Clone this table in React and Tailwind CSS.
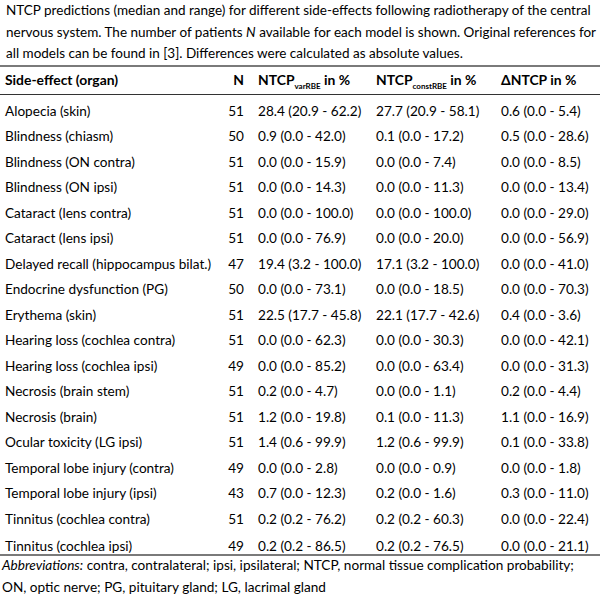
import React from "react";

const rows = [
  ["Alopecia (skin)", "51", "28.4 (20.9 - 62.2)", "27.7 (20.9 - 58.1)", "0.6 (0.0 - 5.4)"],
  ["Blindness (chiasm)", "50", "0.9 (0.0 - 42.0)", "0.1 (0.0 - 17.2)", "0.5 (0.0 - 28.6)"],
  ["Blindness (ON contra)", "51", "0.0 (0.0 - 15.9)", "0.0 (0.0 - 7.4)", "0.0 (0.0 - 8.5)"],
  ["Blindness (ON ipsi)", "51", "0.0 (0.0 - 14.3)", "0.0 (0.0 - 11.3)", "0.0 (0.0 - 13.4)"],
  ["Cataract (lens contra)", "51", "0.0 (0.0 - 100.0)", "0.0 (0.0 - 100.0)", "0.0 (0.0 - 29.0)"],
  ["Cataract (lens ipsi)", "51", "0.0 (0.0 - 76.9)", "0.0 (0.0 - 20.0)", "0.0 (0.0 - 56.9)"],
  ["Delayed recall (hippocampus bilat.)", "47", "19.4 (3.2 - 100.0)", "17.1 (3.2 - 100.0)", "0.0 (0.0 - 41.0)"],
  ["Endocrine dysfunction (PG)", "50", "0.0 (0.0 - 73.1)", "0.0 (0.0 - 18.5)", "0.0 (0.0 - 70.3)"],
  ["Erythema (skin)", "51", "22.5 (17.7 - 45.8)", "22.1 (17.7 - 42.6)", "0.4 (0.0 - 3.6)"],
  ["Hearing loss (cochlea contra)", "51", "0.0 (0.0 - 62.3)", "0.0 (0.0 - 30.3)", "0.0 (0.0 - 42.1)"],
  ["Hearing loss (cochlea ipsi)", "49", "0.0 (0.0 - 85.2)", "0.0 (0.0 - 63.4)", "0.0 (0.0 - 31.3)"],
  ["Necrosis (brain stem)", "51", "0.2 (0.0 - 4.7)", "0.0 (0.0 - 1.1)", "0.2 (0.0 - 4.4)"],
  ["Necrosis (brain)", "51", "1.2 (0.0 - 19.8)", "0.1 (0.0 - 11.3)", "1.1 (0.0 - 16.9)"],
  ["Ocular toxicity (LG ipsi)", "51", "1.4 (0.6 - 99.9)", "1.2 (0.6 - 99.9)", "0.1 (0.0 - 33.8)"],
  ["Temporal lobe injury (contra)", "49", "0.0 (0.0 - 2.8)", "0.0 (0.0 - 0.9)", "0.0 (0.0 - 1.8)"],
  ["Temporal lobe injury (ipsi)", "43", "0.7 (0.0 - 12.3)", "0.2 (0.0 - 1.6)", "0.3 (0.0 - 11.0)"],
  ["Tinnitus (cochlea contra)", "51", "0.2 (0.2 - 76.2)", "0.2 (0.2 - 60.3)", "0.0 (0.0 - 22.4)"],
  ["Tinnitus (cochlea ipsi)", "49", "0.2 (0.2 - 86.5)", "0.2 (0.2 - 76.5)", "0.0 (0.0 - 21.1)"],
];

const cols = "grid grid-cols-[220px_24px_132px_125px_1fr]";

const App = () => {
  return (
    <div className="w-[600px] h-[600px] overflow-hidden bg-white text-black text-[13.6px] leading-[21.5px] font-['Lato',sans-serif]">
      <p className="px-[6px] whitespace-nowrap text-[13.5px]">
        NTCP predictions (median and range) for different side-effects following radiotherapy of the central
        <br />
        nervous system. The number of patients <i>N</i> available for each model is shown. Original references for
        <br />
        all models can be found in [3]. Differences were calculated as absolute values.
      </p>

      <div className="border-t-2 border-[#7a7a7a]">
        <div className={`${cols} items-center h-[28px] font-bold text-[13.9px] border-b border-[#333]`}>
          <div className="pl-[5px]">Side-effect (organ)</div>
          <div className="text-right">N</div>
          <div className="pl-[14px] whitespace-nowrap">
            NTCP<sub className="text-[8px] align-[-2px]">varRBE</sub> in %
          </div>
          <div className="whitespace-nowrap">
            NTCP<sub className="text-[8px] align-[-2px]">constRBE</sub> in %
          </div>
          <div className="whitespace-nowrap">ΔNTCP in %</div>
        </div>

        <div className="pt-[4px] border-b-2 border-[#7a7a7a]">
          {rows.map((r, i) => (
            <div
              key={r[0]}
              className={`${cols} ${i === rows.length - 1 ? "h-[22px] pt-[4px] items-start" : "h-[25.5px] items-center"}`}
            >
              <div className="pl-[5px] whitespace-nowrap">{r[0]}</div>
              <div className="text-right">{r[1]}</div>
              <div className="pl-[14px] whitespace-nowrap">{r[2]}</div>
              <div className="whitespace-nowrap">{r[3]}</div>
              <div className="whitespace-nowrap">{r[4]}</div>
            </div>
          ))}
        </div>
      </div>

      <p className="px-[2px] -mt-[2px] leading-[22px] whitespace-nowrap">
        <i>Abbreviations:</i> contra, contralateral; ipsi, ipsilateral; NTCP, normal tissue complication probability;
        <br />
        ON, optic nerve; PG, pituitary gland; LG, lacrimal gland
      </p>
    </div>
  );
};

export default App;
